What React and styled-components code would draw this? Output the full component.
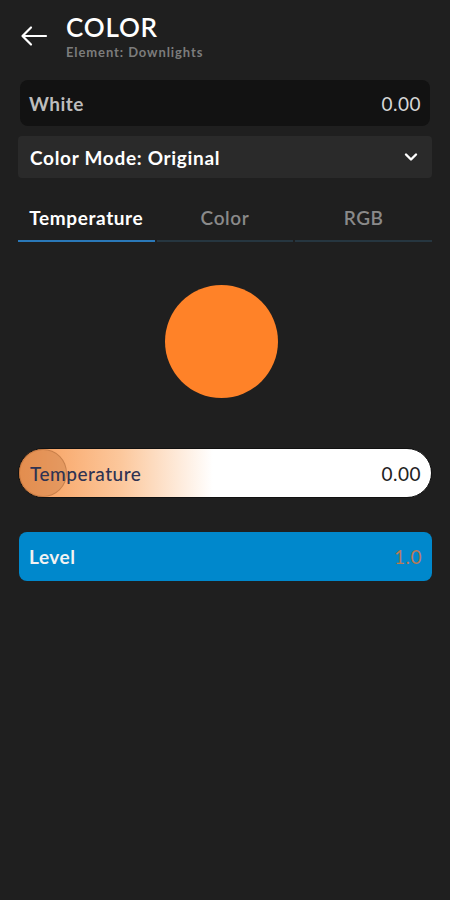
import React from "react";
import styled, { createGlobalStyle } from "styled-components";

const Global = createGlobalStyle`
  html, body { margin: 0; padding: 0; background: #1f1f1f; }
  body { font-family: Lato, "Noto Sans", sans-serif; }
  * { box-sizing: border-box; }
`;

const Page = styled.div`
  width: 450px;
  min-height: 900px;
  background: #1f1f1f;
  padding: 0 18px;
  display: flex;
  flex-direction: column;
`;

const Header = styled.div`
  display: flex;
  align-items: flex-start;
  height: 80px;
  gap: 18px;
  padding: 12px 0 0 2px;
`;

const BackButton = styled.button`
  background: none;
  border: none;
  padding: 0;
  width: 28px;
  height: 28px;
  margin-top: 10px;
  display: flex;
  align-items: center;
  justify-content: center;
  color: #fff;
`;

const TitleBlock = styled.div`
  display: flex;
  flex-direction: column;
`;

const Title = styled.div`
  color: #fff;
  font-size: 26px;
  font-weight: 600;
  letter-spacing: 0.8px;
  line-height: 30px;
`;

const Subtitle = styled.div`
  color: #7c7c7c;
  font-size: 13px;
  font-weight: 700;
  letter-spacing: 0.9px;
  line-height: 14px;
  margin-top: 3px;
`;

const ValueField = styled.div`
  height: 46px;
  margin: 0 2px;
  background: #121212;
  border-radius: 8px;
  display: flex;
  align-items: center;
  justify-content: space-between;
  padding: 0 9px 0 9px;
  font-size: 19px;
  letter-spacing: 0.5px;
  font-weight: 700;
  color: #bdbdbd;
`;

const FieldValue = styled.span`
  font-weight: 400;
  color: #d6d6d6;
`;

const Select = styled.div`
  margin-top: 10px;
  height: 42px;
  background: #2a2a2a;
  border-radius: 4px;
  display: flex;
  align-items: center;
  justify-content: space-between;
  padding: 0 14px 0 12px;
  color: #fff;
  font-size: 19px;
  letter-spacing: 0.7px;
  font-weight: 700;
`;

const Tabs = styled.div`
  margin-top: 21px;
  display: grid;
  grid-template-columns: 1fr 1fr 1fr;
  gap: 2px;
`;

const Tab = styled.div`
  height: 43px;
  display: flex;
  align-items: center;
  justify-content: center;
  font-size: 19px;
  letter-spacing: 0.6px;
  font-weight: ${(p) => (p.$active ? 700 : 600)};
  color: ${(p) => (p.$active ? "#fff" : "#8a8a8a")};
  border-bottom: 2px solid ${(p) => (p.$active ? "#2a78b8" : "#263640")};
  padding-bottom: 4px;
`;

const SwatchWrap = styled.div`
  display: flex;
  justify-content: center;
  padding-top: 43px;
  padding-right: 8px;
`;

const Swatch = styled.div`
  width: 113px;
  height: 113px;
  border-radius: 50%;
  background: #ff8228;
`;

const TempSlider = styled.div`
  position: relative;
  margin-top: 50px;
  height: 50px;
  border-radius: 25px;
  background: linear-gradient(90deg, #f79a55 0%, #fcc89d 25%, #ffffff 47%, #ffffff 100%);
  border: 1px solid #111;
  display: flex;
  align-items: center;
  justify-content: space-between;
  padding: 0 10px 0 11px;
  font-size: 19px;
  letter-spacing: 0.5px;
`;

const Thumb = styled.div`
  position: absolute;
  left: 0;
  top: 0;
  width: 48px;
  height: 48px;
  border-radius: 50%;
  background: rgba(200, 125, 70, 0.42);
  border: 1px solid rgba(150, 85, 40, 0.35);
`;

const SliderLabel = styled.span`
  position: relative;
  color: #2f3352;
  font-weight: 500;
`;

const SliderValue = styled.span`
  position: relative;
  color: #222;
`;

const Level = styled.div`
  margin-top: 34px;
  margin-left: 1px;
  height: 49px;
  background: #0088cc;
  border-radius: 8px;
  display: flex;
  align-items: center;
  justify-content: space-between;
  padding: 0 10px;
  font-size: 19px;
  letter-spacing: 0.5px;
  font-weight: 700;
  color: #f2f2f2;
`;

const LevelValue = styled.span`
  font-weight: 400;
  color: #b97a55;
`;

export default function App() {
  return (
    <>
      <Global />
      <Page>
        <Header>
          <BackButton aria-label="back">
            <svg width="28" height="24" viewBox="0 0 28 24" fill="none" stroke="#fff" strokeWidth="2.2" strokeLinecap="round" strokeLinejoin="round">
              <path d="M26 12H3" />
              <path d="M11 3.5L2.5 12L11 20.5" />
            </svg>
          </BackButton>
          <TitleBlock>
            <Title>COLOR</Title>
            <Subtitle>Element: Downlights</Subtitle>
          </TitleBlock>
        </Header>

        <ValueField>
          <span>White</span>
          <FieldValue>0.00</FieldValue>
        </ValueField>

        <Select>
          <span>Color Mode: Original</span>
          <svg width="14" height="10" viewBox="0 0 14 10" fill="none" stroke="#fff" strokeWidth="2.4" strokeLinecap="round" strokeLinejoin="round">
            <path d="M2 2.5L7 7.5L12 2.5" />
          </svg>
        </Select>

        <Tabs>
          <Tab $active>Temperature</Tab>
          <Tab>Color</Tab>
          <Tab>RGB</Tab>
        </Tabs>

        <SwatchWrap>
          <Swatch />
        </SwatchWrap>

        <TempSlider>
          <Thumb />
          <SliderLabel>Temperature</SliderLabel>
          <SliderValue>0.00</SliderValue>
        </TempSlider>

        <Level>
          <span>Level</span>
          <LevelValue>1.0</LevelValue>
        </Level>
      </Page>
    </>
  );
}
